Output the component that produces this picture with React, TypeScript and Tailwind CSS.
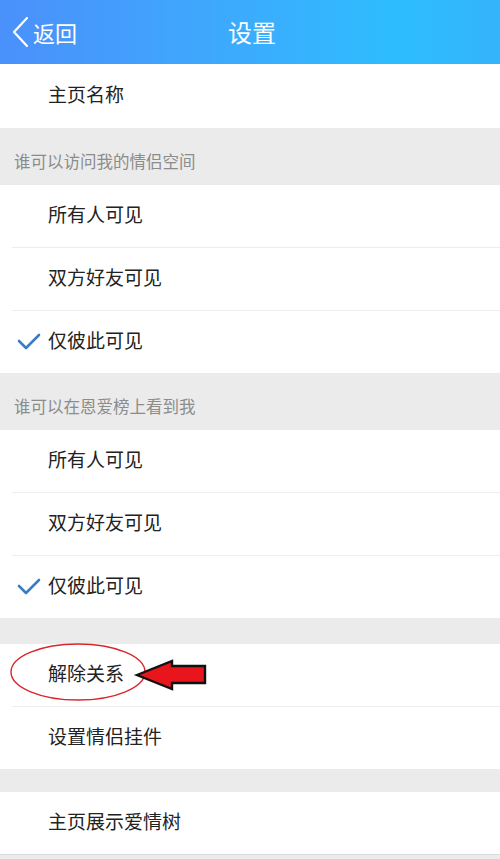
const font = { fontFamily: '"Noto Sans CJK SC", "Noto Sans", sans-serif' };

const Check = () => (
	<svg width="24" height="18" viewBox="0 0 24 18" className="absolute left-[5px] top-1/2 -translate-y-1/2">
		<path d="M2 8 L9 15 L22 2" fill="none" stroke="#3a7dc6" strokeWidth="2.6" strokeLinecap="round" strokeLinejoin="round" />
	</svg>
);

const Row = ({ label, first, checked, h }: { label: string; first?: boolean; checked?: boolean; h?: string }) => (
	<div className={`bg-white ${first ? '' : 'pl-3'}`}>
		<div className={`relative flex items-center ${h ?? (first ? 'h-[62px]' : 'h-[63px]')} ${first ? '' : 'border-t border-[#ededed]'}`}>
			{checked && <Check />}
			<span className={`${first ? 'pl-12' : 'pl-9'} pb-[3px] text-[19px] text-[#222]`}>{label}</span>
		</div>
	</div>
);

const SectionTitle = ({ text }: { text: string }) => (
	<div className="h-[57px] bg-[#ebebeb] flex items-center pl-[14px] pt-[10px]">
		<span className="text-[16.5px] text-[#8c8c8c]">{text}</span>
	</div>
);

export default function App() {
	return (
		<div className="w-[500px] h-[859px] bg-[#ebebeb] overflow-hidden" style={font}>
			<header className="relative h-16 flex items-center bg-gradient-to-r from-[#4a90fb] via-[#2cbdfe] via-80% to-[#34b3fa] text-white">
				<div className="flex items-center pl-[11px]">
					<svg width="20" height="32" viewBox="0 0 20 32">
						<path d="M16 2 L3 16 L16 30" fill="none" stroke="white" strokeWidth="2.2" strokeLinecap="round" strokeLinejoin="round" />
					</svg>
					<span className="ml-[2px] text-[22px]">返回</span>
				</div>
				<div className="absolute inset-0 flex items-center justify-center pointer-events-none">
					<span className="text-[24px] pl-1">设置</span>
				</div>
			</header>

			<Row label="主页名称" first h="h-16" />
			<SectionTitle text="谁可以访问我的情侣空间" />
			<Row label="所有人可见" first />
			<Row label="双方好友可见" />
			<Row label="仅彼此可见" checked />

			<SectionTitle text="谁可以在恩爱榜上看到我" />
			<Row label="所有人可见" first />
			<Row label="双方好友可见" />
			<Row label="仅彼此可见" checked />

			<div className="h-[26px]" />
			<div className="relative">
				<Row label="解除关系" first />
				<svg width="220" height="70" viewBox="0 0 220 70" className="absolute left-0 top-[-5px] pointer-events-none">
					<ellipse cx="78" cy="33" rx="67" ry="28" fill="none" stroke="#d8262c" strokeWidth="1.4" />
					<path d="M137 36 L172 22 L172 27 L205 27 L205 44 L172 44 L172 50 Z" fill="#e8151d" stroke="#111" strokeWidth="2.4" strokeLinejoin="miter" />
				</svg>
			</div>
			<Row label="设置情侣挂件" />

			<div className="h-[23px]" />
			<div className="bg-white border-b border-[#dcdcdc]">
				<div className="flex items-center h-[62px]">
					<span className="pl-12 pb-[3px] text-[19px] text-[#222]">主页展示爱情树</span>
				</div>
			</div>
		</div>
	);
}
